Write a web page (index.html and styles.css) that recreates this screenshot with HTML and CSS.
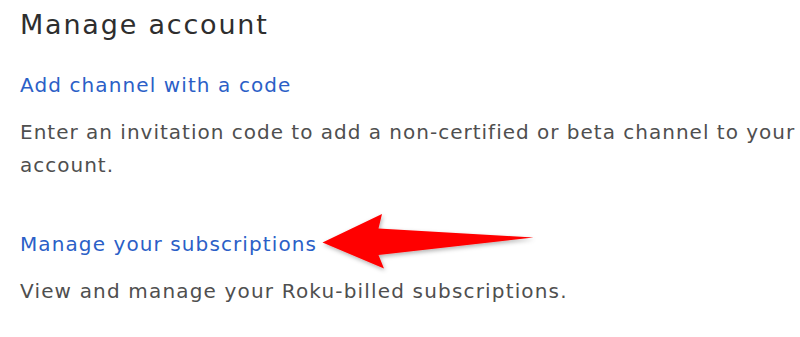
FILE: index.html
```html
<!DOCTYPE html>
<html>
<head>
<meta charset="utf-8">
<link rel="stylesheet" href="styles.css">
</head>
<body>
<main class="page">
  <h1 class="title">Manage account</h1>
  <section class="item">
    <a class="link" href="#">Add channel with a code</a>
    <p class="desc">Enter an invitation code to add a non-certified or beta channel to your account.</p>
  </section>
  <section class="item second">
    <a class="link" href="#">Manage your subscriptions</a>
    <p class="desc wide">View and manage your Roku-billed subscriptions.</p>
  </section>
  <svg class="arrow" width="240" height="75" viewBox="310 205 240 75">
    <defs>
      <filter id="sh" x="-10%" y="-30%" width="120%" height="160%">
        <feDropShadow dx="1" dy="2" stdDeviation="2" flood-color="#000" flood-opacity="0.3"/>
      </filter>
    </defs>
    <path d="M322.5 242.5 L382 214 L378.5 228.5 L533.5 237.5 L378.5 255 L384 268.5 Z" fill="#ff0000" filter="url(#sh)"/>
  </svg>
</main>
</body>
</html>
```
FILE: styles.css
```css
html, body {
  margin: 0;
  padding: 0;
  background: #ffffff;
}
.page {
  position: relative;
  width: 800px;
  height: 337px;
  padding: 5px 0 0 20px;
  box-sizing: border-box;
  font-family: "DejaVu Sans", "Open Sans", sans-serif;
  overflow: hidden;
}
.title {
  margin: 0;
  font-size: 27px;
  line-height: 40px;
  font-weight: 400;
  color: #2e2e2e;
  letter-spacing: 1.8px;
}
.item {
  margin-top: 24px;
}
.item.second {
  margin-top: 46px;
}
.link {
  display: block;
  font-size: 20px;
  line-height: 32px;
  color: #2b5fc7;
  text-decoration: none;
  letter-spacing: 1.1px;
}
.desc {
  margin: 15px 0 0;
  font-size: 20px;
  line-height: 33px;
  color: #4f4f4f;
  letter-spacing: 1px;
}
.desc.wide {
  letter-spacing: 1.17px;
}
.arrow {
  position: absolute;
  left: 310px;
  top: 205px;
}
```
